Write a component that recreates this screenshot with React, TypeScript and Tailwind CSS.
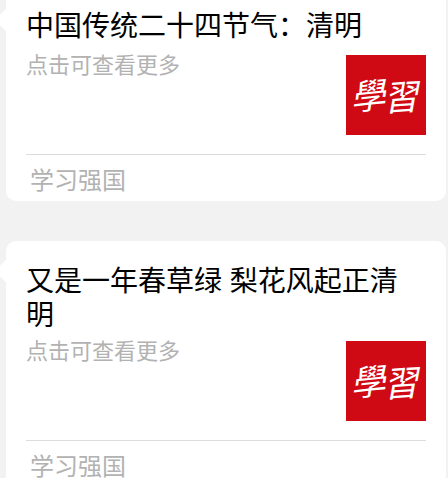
import React from 'react';
import clsx from 'clsx';

type Article = {
  title: string;
  summary: string;
  source: string;
  continued?: boolean;
};

const articles: Article[] = [
  { title: "中国传统二十四节气：清明", summary: "点击可查看更多", source: "学习强国", continued: true },
  { title: "又是一年春草绿 梨花风起正清明", summary: "点击可查看更多", source: "学习强国" }
];

const Logo: React.FC = () => (
  <svg viewBox="0 0 80 80" className="w-20 h-20 shrink-0" role="img" aria-label="學習">
    <rect width="80" height="80" fill="#d00a14" />
    <g fill="#fff" fontSize="35" fontStyle="italic" fontFamily="'Noto Sans CJK TC', sans-serif">
      <text x="4" y="54" transform="rotate(-6 21 41)">學</text>
      <text x="37" y="55" transform="rotate(-4 54 42)">習</text>
    </g>
  </svg>
);

const ArticleCard: React.FC<{ article: Article }> = ({ article }) => (
  <a
    href="#"
    className={clsx(
      "relative block bg-white px-5",
      article.continued ? "rounded-b-[10px] pt-[10px]" : "rounded-[10px] pt-6"
    )}
  >
    {/* bubble pointer */}
    <span
      className={clsx(
        "absolute -left-2 w-4 h-4 bg-white rotate-45",
        article.continued ? "top-3" : "top-[22px]"
      )}
    ></span>
    <h2
      className={clsx(
        "text-[28px] leading-[34px] text-black pr-4",
        article.continued ? "mb-[11px]" : "mb-2"
      )}
    >
      {article.title}
    </h2>
    <div className="flex justify-between gap-4 pb-[19px]">
      <p className="text-[22px] leading-[22px] text-[#b2b2b2]">{article.summary}</p>
      <Logo />
    </div>
    <div className="border-t border-[#dcdcdc] px-1 pt-2 pb-[2px]">
      <span className="block text-2xl leading-9 text-[#b2b2b2]">{article.source}</span>
    </div>
  </a>
);

const App: React.FC = () => {
  return (
    <main
      lang="zh-CN"
      className="h-screen overflow-hidden bg-[#f2f2f2] pl-[6px] pr-[2px] flex flex-col gap-10 font-['Liberation_Sans','Noto_Sans_CJK_SC',sans-serif]"
    >
      {articles.map((article, i) => (
        <ArticleCard key={i} article={article} />
      ))}
    </main>
  );
};

export default App;
